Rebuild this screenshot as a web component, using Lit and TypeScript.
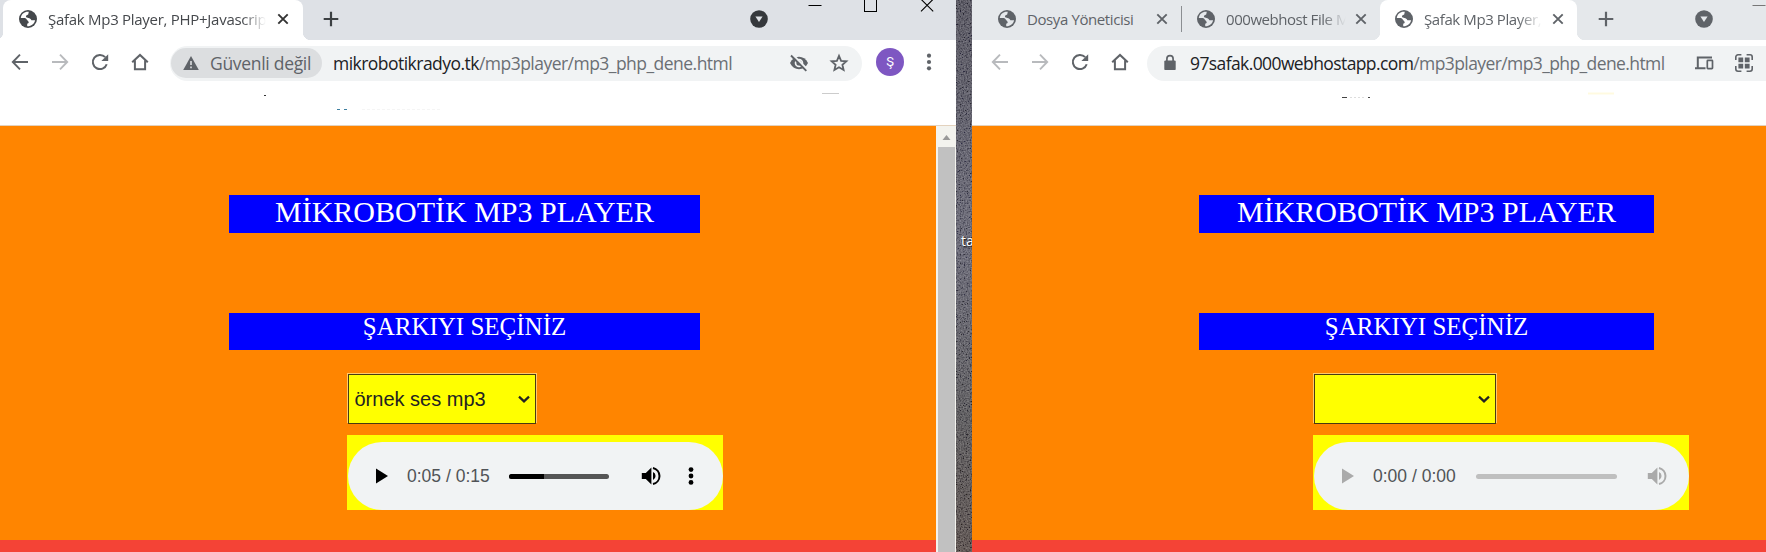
import { LitElement, html, css, svg, nothing } from "lit";
import { customElement, property } from "lit/decorators.js";

const icons: Record<string, unknown> = {
  globe: svg`<circle cx="10" cy="10" r="9" fill="currentColor"/><path d="M10.8 2.7 C6.6 2.3 3.2 4.8 2.8 8.9 L6.9 9.1 C8.6 9.3 8.6 11 9.8 11.8 C11.2 13 11 14.6 9.2 14.8 L9.2 17.2 C13 17.4 16.4 14.9 17.1 11.2 L13.4 11.3 C12.6 9.8 12 9.2 10.4 9 L8.2 8.3 C7.2 6.7 8.8 6 10.2 5.4Z" fill="var(--hole,#fff)"/>`,
  close: svg`<path d="M5.3 5.3 L14.7 14.7 M14.7 5.3 L5.3 14.7" stroke="currentColor" stroke-width="1.9"/>`,
  plus: svg`<path d="M10 2.7 V17.3 M2.7 10 H17.3" stroke="currentColor" stroke-width="2.2"/>`,
  search: svg`<circle cx="10" cy="10" r="8.8" fill="currentColor"/><path d="M6.4 7.4 H13.6 L10 13Z" fill="var(--hole,#fff)"/>`,
  back: svg`<path d="M18 10 H3 M10 2.7 L2.8 10 L10 17.3" fill="none" stroke="currentColor" stroke-width="1.9"/>`,
  forward: svg`<path d="M2 10 H17 M10 2.7 L17.2 10 L10 17.3" fill="none" stroke="currentColor" stroke-width="1.9"/>`,
  reload: svg`<path d="M16.7 12.2 A7.1 7.1 0 1 1 15.2 5.2" fill="none" stroke="currentColor" stroke-width="2"/><path d="M18.2 2.2 V9 H11.4Z" fill="currentColor"/>`,
  home: svg`<path d="M2.2 10.3 L10 2.9 L17.8 10.3 M4.9 8.5 V17.3 H15.1 V8.5" fill="none" stroke="currentColor" stroke-width="2"/>`,
  warning: svg`<path d="M10 3 L17.8 17 H2.2Z" fill="currentColor"/><path d="M10 8 V12 M10 13.5 V15.2" stroke="#dcdee0" stroke-width="1.6"/>`,
  eye: svg`<path d="M1 10 C3 5.8 6.3 3.8 10 3.8 S17 5.8 19 10 C17 14.2 13.7 16.2 10 16.2 S3 14.2 1 10Z" fill="currentColor"/><circle cx="10" cy="10" r="4.3" fill="#f1f3f4"/><circle cx="10" cy="10" r="2.6" fill="currentColor"/><path d="M3 1 L19.5 17.5" stroke="#f1f3f4" stroke-width="2.2"/><path d="M2 2.5 L17.3 17.8" stroke="currentColor" stroke-width="1.9"/>`,
  star: svg`<path d="M10 2.9 L12.1 7.8 L17.4 8.3 L13.4 11.8 L14.6 17 L10 14.3 L5.4 17 L6.6 11.8 L2.6 8.3 L7.9 7.8Z" fill="none" stroke="currentColor" stroke-width="1.8"/>`,
  dots: svg`<circle cx="10" cy="3.7" r="2.1"/><circle cx="10" cy="10" r="2.1"/><circle cx="10" cy="16.3" r="2.1"/>`,
  playerDots: svg`<circle cx="10" cy="3.6" r="2.4"/><circle cx="10" cy="10" r="2.4"/><circle cx="10" cy="16.4" r="2.4"/>`,
  lock: svg`<rect x="4.3" y="7.4" width="11.4" height="9.7" rx="1.2" fill="currentColor"/><path d="M6.9 8 V5.8 A3.1 3.1 0 0 1 13.1 5.8 V8" fill="none" stroke="currentColor" stroke-width="1.7"/>`,
  devices: svg`<path d="M18 4.6 H3.8 V14.5 M1 15.2 H11.5" fill="none" stroke="currentColor" stroke-width="2"/><rect x="13.3" y="7.4" width="5.2" height="8.3" rx=".6" fill="none" stroke="currentColor" stroke-width="1.7"/>`,
  qr: svg`<path d="M1.8 7 V4 A2.2 2.2 0 0 1 4 1.8 H7.4 M12.6 1.8 H16 A2.2 2.2 0 0 1 18.2 4 V7 M18.2 13 V16 A2.2 2.2 0 0 1 16 18.2 H12.6 M7.4 18.2 H4 A2.2 2.2 0 0 1 1.8 16 V13" fill="none" stroke="currentColor" stroke-width="1.6"/><path d="M4.4 4.4 H9.2 V9.2 H4.4Z M10.8 4.4 H15.6 V9.2 H10.8Z M4.4 10.8 H9.2 V15.6 H4.4Z M10.8 10.8 H15.6 V15.6 H10.8Z" fill="currentColor"/>`,
  play: svg`<path d="M4 2.6 L16 10 L4 17.4Z"/>`,
  volume: svg`<path d="M.8 7 H4.8 L10.4 1.4 V18.6 L4.8 13 H.8Z"/><path d="M12 6 A4.4 4.4 0 0 1 12 14Z"/><path d="M12 1.9 A8.3 8.3 0 0 1 12 18.1" fill="none" stroke="currentColor" stroke-width="2"/>`,
  chevron: svg`<path d="M5 7.6 L10 12.4 L15 7.6" fill="none" stroke="currentColor" stroke-width="2.2"/>`,
  minimize: svg`<path d="M3.5 10.5 H16.5" stroke="currentColor" stroke-width="1"/>`,
  maximize: svg`<rect x="4.5" y="4.5" width="12" height="12" fill="none" stroke="currentColor"/>`,
  quit: svg`<path d="M4 4.2 L16.2 16.4 M16.2 4.2 L4 16.4" stroke="currentColor" stroke-width="1.1"/>`,
};

const icon = (name: string, cls = "") =>
  html`<svg class="icon ${cls}" viewBox="0 0 20 20" width="20" height="20" fill="currentColor">${icons[name]}</svg>`;

@customElement("mp3-page")
class Mp3Page extends LitElement {
  @property() song = "";
  @property() time = "";
  @property({ type: Boolean }) loaded = false;

  static styles = css`
    :host { display: flex; flex-direction: column; flex: 1; min-width: 0; background: #ff8500; overflow: hidden; }
    .content { height: 414px; display: flex; flex-direction: column; flex: none; }
    .bar { margin-left: 227px; width: 455px; color: #fff; background: #00f; text-align: center;
      font-family: "Liberation Serif", serif; white-space: nowrap; }
    .loaded .bar { margin-left: 229px; width: 471px; }
    .title { margin-top: 69px; height: 38px; font-size: 30px; line-height: 34px; }
    .pick { margin-top: 80px; height: 37px; font-size: 25px; line-height: 27px; }
    .select { box-sizing: border-box; margin: 24px 0 0 342px; width: 182px; height: 50px; display: flex;
      align-items: center; justify-content: space-between; border: 1px solid #4a3a10; background: #ff0;
      color: #222; padding: 0 1px 0 5.5px; font: 20px "Liberation Sans", sans-serif;
      box-shadow: -1px -1px 0 #ffc96b, 1px -1px 0 #ffc96b; }
    .loaded .select { margin-left: 348px; width: 188px; }
    .player { margin: 11px 0 0 341px; width: 376px; height: 75px; padding: 7px 0 0 1px; box-sizing: border-box;
      background: #ff0; }
    .loaded .player { margin-left: 347px; }
    .pill { height: 68px; width: 374.5px; border-radius: 34px; background: #f1f3f4; display: flex;
      align-items: center; color: #aaa; }
    .loaded .pill { color: #000; }
    .play { margin-left: 24px; }
    .time { width: 83px; margin: 0 20px 0 15px; color: #505357; font: 17.5px "Liberation Sans", sans-serif;
      white-space: nowrap; }
    .loaded .time { margin-right: 19px; }
    .rail { height: 5px; width: 141px; border-radius: 3px; background: #bfbfbf; overflow: hidden; }
    .loaded .rail { width: 100px; background: #555; }
    .done { height: 5px; background: #000; }
    .volume { margin-left: 29.5px; }
    .loaded .volume { margin-left: 31.5px; }
    .more { margin-left: 20px; }
    .icon { flex: none; display: block; }
    .footer { flex: 1; background: #f44336; }
  `;

  render() {
    return html`
      <div class="content ${this.loaded ? "loaded" : ""}">
        <div class="bar title">MİKROBOTİK MP3 PLAYER</div>
        <div class="bar pick">ŞARKIYI SEÇİNİZ</div>
        <div class="select"><span>${this.song}</span>${icon("chevron")}</div>
        <div class="player">
          <div class="pill">
            ${icon("play", "play")}
            <span class="time">${this.time}</span>
            <div class="rail">${this.loaded ? html`<div class="done" style="width:35%"></div>` : nothing}</div>
            ${icon("volume", "volume")}
            ${this.loaded ? icon("playerDots", "more") : nothing}
          </div>
        </div>
      </div>
      <div class="footer"></div>
    `;
  }
}

@customElement("app-root")
class AppRoot extends LitElement {
  static styles = css`
    :host { display: flex; width: 1766px; height: 552px; overflow: hidden; background: #fff;
      font-family: "Open Sans", "Noto Sans", sans-serif; }
    .window { display: flex; flex-direction: column; flex: none; overflow: hidden; background: #fff; color: #5f6368; }
    .one { width: 956px; }
    .two { width: 794px; }
    .icon { flex: none; display: block; }
    .strip { height: 40px; display: flex; flex: none; overflow: hidden; background: #dee1e6; }
    .two .strip { background: #e5e8eb; --hole: #e5e8eb; }
    .tab { box-sizing: border-box; height: 40px; display: flex; align-items: center; flex: none;
      padding-bottom: 2px; font-size: 15px; }
    .active { background: #fff; border-radius: 8px 8px 0 0; position: relative; --hole: #fff; }
    .two .active { --hole: #fff; }
    .active::before, .active::after { content: ""; position: absolute; bottom: 0; width: 8px; height: 8px; }
    .active::before { left: -8px; background: radial-gradient(circle at 0 0, transparent 8px, #fff 8.5px); }
    .active::after { right: -8px; background: radial-gradient(circle at 100% 0, transparent 8px, #fff 8.5px); }
    .label { white-space: nowrap; overflow: hidden; margin-left: 10px; line-height: 24px; }
    .fade { -webkit-mask-image: linear-gradient(90deg, #000 calc(100% - 24px), transparent); }
    .t1 { width: 300px; margin-left: 3px; padding-left: 15px; color: #45484c; }
    .t1 .label { width: 218px; letter-spacing: -.28px; }
    .t1 .x { margin-left: 7px; color: #333; }
    .t2 { width: 209px; padding-left: 25px; }
    .t2 .label { width: 115px; letter-spacing: -.4px; }
    .t2 .x { margin-left: 10px; }
    .sep { width: 1px; height: 26px; margin: 6px 0 0; background: #8b8e92; flex: none; }
    .t3 { width: 198px; padding-left: 14px; }
    .t3 .label { width: 120px; letter-spacing: -.45px; }
    .t3 .x { margin-left: 5px; }
    .t4 { width: 197px; padding-left: 14px; }
    .t4 .label { width: 118px; letter-spacing: -.4px; }
    .t4 .x { margin-left: 6px; }
    .plus { margin: 9px 0 0 19px; }
    .one .plus { margin-left: 17.5px; color: #3c4043; }
    .one .find { margin: 9px 0 0 408px; color: #35383c; --hole: #dee1e6; }
    .two .find { margin: 9px 0 0 78px; }
    .ctl { color: #000; margin-top: -5px; }
    .min { margin-left: 36px; }
    .max { margin-left: 35px; margin-top: -5px; }
    .quit { margin-left: 37px; margin-top: -5px; }
    .two .min { margin-left: 35px; color: #777; }
    .toolbar { height: 43px; display: flex; align-items: center; flex: none; }
    .nav { display: flex; gap: 20px; margin-left: 10px; flex: none; }
    .two .nav { margin-left: 18px; }
    .off { color: #b8babd; }
    .address { box-sizing: border-box; height: 35px; margin: 3px 0 0 19.5px; display: flex; align-items: center;
      background: #f1f3f4; flex: none; font-size: 17.5px; }
    .one .address { width: 692px; border-radius: 18px; }
    .two .address { width: 630px; border-radius: 18px 0 0 18px; margin-left: 17px; }
    .chip { box-sizing: border-box; width: 151px; height: 30px; margin-left: 1px; padding-left: 10px;
      border-radius: 15px; background: #dcdee0; display: flex; align-items: center; flex: none; }
    .chip span { margin-left: 9.5px; white-space: nowrap; letter-spacing: -.3px; }
    .url { white-space: nowrap; letter-spacing: -.53px; flex: none; color: #6b6f74; line-height: 24px; padding-bottom: 1px; }
    .host { color: #202124; }
    .one .url { margin-left: 11.5px; width: 456px; }
    .two .url { margin-left: 10px; width: 503.5px; letter-spacing: -.6px; }
    .lock { margin-left: 13px; }
    .star { margin-left: 20px; }
    .qr { margin-left: 20.5px; }
    .avatar { width: 28px; height: 28px; margin: 1px 0 0 14.5px; border-radius: 50%; background: #7e57c2; color: #fff;
      font: 13px/27px Roboto, sans-serif; text-align: center; flex: none; }
    .menu { margin-left: 15px; }
    .blank { height: 42px; display: block; flex: none; }
    .edge { height: 1px; background: #e3d2be; flex: none; }
    .view { display: flex; flex: 1; min-height: 0; }
    .scroll { width: 20px; box-sizing: border-box; background: #f3f3ee; padding: 0 1px 0 2px; display: flex;
      flex-direction: column; flex: none; }
    .up { height: 21px; display: block; flex: none; }
    .thumb { flex: 1; background: #c1c1c1; }
    .desktop { width: 16px; flex: none; position: relative; overflow: hidden; }
    .desktop svg { display: block; }
    .caption { position: absolute; left: 5px; top: 231px; color: #fff; font-size: 14px; line-height: 20px;
      text-shadow: 1px 1px 2px #000; }
  `;

  render() {
    return html`
      <div class="window one">
        <div class="strip">
          <div class="tab active t1">
            ${icon("globe")}<span class="label fade">Şafak Mp3 Player, PHP+Javascript</span>${icon("close", "x")}
          </div>
          ${icon("plus", "plus")}${icon("search", "find")}
          ${icon("minimize", "ctl min")}${icon("maximize", "ctl max")}${icon("quit", "ctl quit")}
        </div>
        <div class="toolbar">
          <div class="nav">${icon("back")}${icon("forward", "off")}${icon("reload")}${icon("home")}</div>
          <div class="address">
            <div class="chip">${icon("warning")}<span>Güvenli değil</span></div>
            <div class="url"><span class="host">mikrobotikradyo.tk</span>/mp3player/mp3_php_dene.html</div>
            ${icon("eye")}${icon("star", "star")}
          </div>
          <div class="avatar">Ş</div>
          ${icon("dots", "menu")}
        </div>
        <svg class="blank" width="956" height="42">
          <path d="M264 12.5 h2" stroke="#333"/><path d="M337 26.5 h3 M344 26.5 h3" stroke="#3d7fa0"/>
          <path d="M362 26.5 h78" stroke="#f5f5f5" stroke-dasharray="3 2"/><path d="M822 10.5 h17" stroke="#ccc"/>
        </svg>
        <div class="edge"></div>
        <div class="view">
          <mp3-page loaded song="örnek ses mp3" time="0:05 / 0:15"></mp3-page>
          <div class="scroll">
            <svg class="up" width="17" height="21"><path d="M4.5 14 L8.5 9 L12.5 14Z" fill="#999"/></svg>
            <div class="thumb"></div>
          </div>
        </div>
      </div>
      <div class="desktop">
        <svg width="16" height="552">
          <defs>
            <linearGradient id="ground" x1="0" y1="0" x2="0" y2="1">
              <stop offset="0" stop-color="#35333f"/><stop offset=".45" stop-color="#4f4e5e"/>
              <stop offset=".75" stop-color="#3d3b3c"/><stop offset="1" stop-color="#3e3029"/>
            </linearGradient>
            <filter id="grain" x="0" y="0" width="100%" height="100%">
              <feTurbulence type="fractalNoise" baseFrequency=".7" numOctaves="2" seed="4"/>
              <feColorMatrix values="1.6 0 0 0 -.4  1.6 0 0 0 -.4  1.6 0 0 0 -.37  0 0 0 0 .35"/>
            </filter>
          </defs>
          <rect width="16" height="552" fill="url(#ground)"/>
          <rect width="16" height="552" filter="url(#grain)"/>
        </svg>
        <span class="caption">ta</span>
      </div>
      <div class="window two">
        <div class="strip">
          <div class="tab t2">${icon("globe")}<span class="label">Dosya Yöneticisi</span>${icon("close", "x")}</div>
          <div class="sep"></div>
          <div class="tab t3">${icon("globe")}<span class="label fade">000webhost File Manager</span>${icon("close", "x")}</div>
          <div class="tab active t4">${icon("globe")}<span class="label fade">Şafak Mp3 Player, PHP</span>${icon("close", "x")}</div>
          ${icon("plus", "plus")}${icon("search", "find")}${icon("minimize", "ctl min")}
        </div>
        <div class="toolbar">
          <div class="nav">${icon("back", "off")}${icon("forward", "off")}${icon("reload")}${icon("home")}</div>
          <div class="address">
            ${icon("lock", "lock")}
            <div class="url"><span class="host">97safak.000webhostapp.com</span>/mp3player/mp3_php_dene.html</div>
            ${icon("devices")}${icon("qr", "qr")}
          </div>
        </div>
        <svg class="blank" width="794" height="42">
          <path d="M370 14.5 h5 M396 14.5 h2" stroke="#444"/><path d="M378 14.5 h16" stroke="#ddd" stroke-dasharray="2 2"/>
          <path d="M616 10.5 h26" stroke="#fffae0" stroke-width="2"/>
        </svg>
        <div class="edge"></div>
        <div class="view"><mp3-page time="0:00 / 0:00"></mp3-page></div>
      </div>
    `;
  }
}
